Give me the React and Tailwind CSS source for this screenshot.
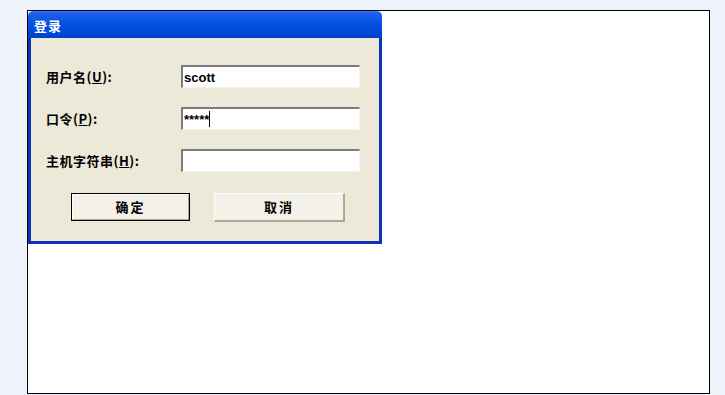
import React from "react";

const cjk = { fontFamily: '"Noto Sans CJK SC", "Liberation Sans", sans-serif' };

function Field({ label, hot, value, caret }) {
  return (
    <div className="flex items-center h-[23px]">
      <div className="w-[135px] text-[13px] font-bold text-black leading-none tracking-[0.5px]" style={cjk}>
        {label}(<span className="underline">{hot}</span>):
      </div>
      <div className="flex items-center w-[179px] h-[23px] bg-white border-t-2 border-l-2 border-b border-r border-t-[#7b7b7b] border-l-[#7b7b7b] border-b-[#f4f3ee] border-r-[#f4f3ee] pl-[1px]">
        <span className="text-[13px] font-bold text-black leading-none font-['Liberation_Sans',sans-serif]">{value}</span>
        {caret && <span className="w-px h-[16px] bg-black" />}
      </div>
    </div>
  );
}

export default function App() {
  return (
    <div className="w-[725px] h-[395px] bg-[#eef2fb] pt-[10px] pl-[27px] overflow-hidden">
      <div className="relative w-[683px] h-[384px] bg-white border border-black">
        {/* login window */}
        <div className="absolute left-0 top-0 w-[354px] h-[233px] flex flex-col">
          <div className="h-[27px] rounded-t-[5px] bg-gradient-to-b from-[#1f62ee] via-[#0050e0] to-[#0040cc] flex items-center pl-[6px] border-t border-[#3a7cf5]">
            <span className="text-white text-[13px] font-bold leading-none tracking-[1px]" style={cjk}>登录</span>
          </div>
          <div className="flex-1 bg-[#ece9d8] border-l-[3px] border-r-[3px] border-b-[3px] border-[#0b34bb] pt-[27px] pl-[15px]">
            <div className="flex flex-col gap-[19px]">
              <Field label="用户名" hot="U" value="scott" />
              <Field label="口令" hot="P" value="*****" caret />
              <Field label="主机字符串" hot="H" value="" />
            </div>
            <div className="flex mt-[21px] pl-[25px] gap-[24px]">
              <button className="w-[119px] h-[28px] border border-black bg-[#f3f1e8] flex items-center justify-center">
                <span className="w-full h-full flex items-center justify-center border-t border-l border-white border-b border-r border-b-[#a9a695] border-r-[#a9a695] text-[13px] font-bold text-black tracking-[2px]" style={cjk}>确定</span>
              </button>
              <button className="w-[131px] h-[29px] bg-[#f3f1e8] border-t border-l border-white border-b-2 border-r-2 border-b-[#aca899] border-r-[#aca899] flex items-center justify-center text-[13px] font-bold text-black tracking-[2px]" style={cjk}>
                取消
              </button>
            </div>
          </div>
        </div>
      </div>
    </div>
  );
}
